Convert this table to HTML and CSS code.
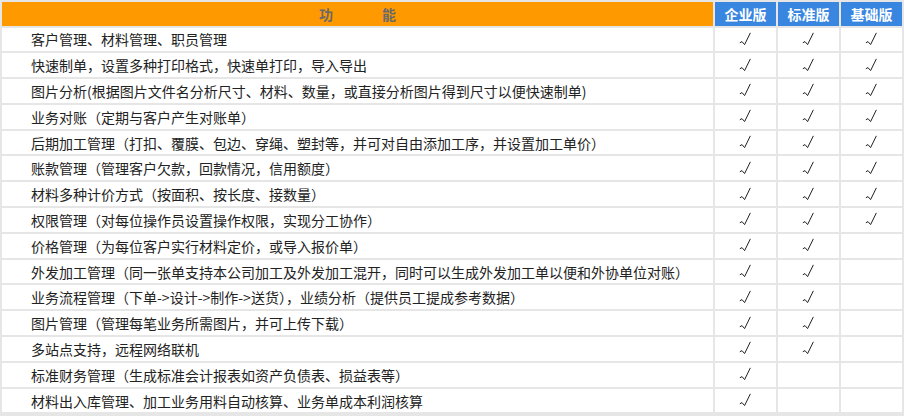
FILE: index.html
```html
<!DOCTYPE html>
<html lang="zh-CN">
<head>
<meta charset="utf-8">
<title>功能对比</title>
<link rel="stylesheet" href="styles.css">
</head>
<body>
<svg class="defs" width="0" height="0" aria-hidden="true">
  <symbol id="ck" viewBox="0 0 14 14">
    <path d="M1.2 10.6 L3 9.6 L5.6 12.6 L11.2 1.2" fill="none" stroke="#222" stroke-width="1" stroke-linecap="round" stroke-linejoin="round"/>
  </symbol>
</svg>
<table class="grid">
  <colgroup><col class="c-func"><col class="c-ed"><col class="c-ed"><col class="c-ed"></colgroup>
  <thead>
    <tr class="head">
      <th class="h-func"><span class="hw">功</span><span class="hw">能</span></th>
      <th class="h-ed">企业版</th>
      <th class="h-ed">标准版</th>
      <th class="h-ed">基础版</th>
    </tr>
  </thead>
  <tbody>
    <tr><td class="f">客户管理、材料管理、职员管理</td><td class="k"><svg class="tick"><use href="#ck"/></svg></td><td class="k"><svg class="tick"><use href="#ck"/></svg></td><td class="k"><svg class="tick"><use href="#ck"/></svg></td></tr>
    <tr><td class="f">快速制单，设置多种打印格式，快速单打印，导入导出</td><td class="k"><svg class="tick"><use href="#ck"/></svg></td><td class="k"><svg class="tick"><use href="#ck"/></svg></td><td class="k"><svg class="tick"><use href="#ck"/></svg></td></tr>
    <tr><td class="f">图片分析(根据图片文件名分析尺寸、材料、数量，或直接分析图片得到尺寸以便快速制单)</td><td class="k"><svg class="tick"><use href="#ck"/></svg></td><td class="k"><svg class="tick"><use href="#ck"/></svg></td><td class="k"><svg class="tick"><use href="#ck"/></svg></td></tr>
    <tr><td class="f">业务对账（定期与客户产生对账单）</td><td class="k"><svg class="tick"><use href="#ck"/></svg></td><td class="k"><svg class="tick"><use href="#ck"/></svg></td><td class="k"><svg class="tick"><use href="#ck"/></svg></td></tr>
    <tr><td class="f">后期加工管理（打扣、覆膜、包边、穿绳、塑封等，并可对自由添加工序，并设置加工单价）</td><td class="k"><svg class="tick"><use href="#ck"/></svg></td><td class="k"><svg class="tick"><use href="#ck"/></svg></td><td class="k"><svg class="tick"><use href="#ck"/></svg></td></tr>
    <tr><td class="f">账款管理（管理客户欠款，回款情况，信用额度）</td><td class="k"><svg class="tick"><use href="#ck"/></svg></td><td class="k"><svg class="tick"><use href="#ck"/></svg></td><td class="k"><svg class="tick"><use href="#ck"/></svg></td></tr>
    <tr><td class="f">材料多种计价方式（按面积、按长度、接数量）</td><td class="k"><svg class="tick"><use href="#ck"/></svg></td><td class="k"><svg class="tick"><use href="#ck"/></svg></td><td class="k"><svg class="tick"><use href="#ck"/></svg></td></tr>
    <tr><td class="f">权限管理（对每位操作员设置操作权限，实现分工协作）</td><td class="k"><svg class="tick"><use href="#ck"/></svg></td><td class="k"><svg class="tick"><use href="#ck"/></svg></td><td class="k"><svg class="tick"><use href="#ck"/></svg></td></tr>
    <tr><td class="f">价格管理（为每位客户实行材料定价，或导入报价单）</td><td class="k"><svg class="tick"><use href="#ck"/></svg></td><td class="k"><svg class="tick"><use href="#ck"/></svg></td><td class="k"></td></tr>
    <tr><td class="f">外发加工管理（同一张单支持本公司加工及外发加工混开，同时可以生成外发加工单以便和外协单位对账）</td><td class="k"><svg class="tick"><use href="#ck"/></svg></td><td class="k"><svg class="tick"><use href="#ck"/></svg></td><td class="k"></td></tr>
    <tr><td class="f">业务流程管理（下单-&gt;设计-&gt;制作-&gt;送货），业绩分析（提供员工提成参考数据）</td><td class="k"><svg class="tick"><use href="#ck"/></svg></td><td class="k"><svg class="tick"><use href="#ck"/></svg></td><td class="k"></td></tr>
    <tr><td class="f">图片管理（管理每笔业务所需图片，并可上传下载）</td><td class="k"><svg class="tick"><use href="#ck"/></svg></td><td class="k"><svg class="tick"><use href="#ck"/></svg></td><td class="k"></td></tr>
    <tr><td class="f">多站点支持，远程网络联机</td><td class="k"><svg class="tick"><use href="#ck"/></svg></td><td class="k"><svg class="tick"><use href="#ck"/></svg></td><td class="k"></td></tr>
    <tr><td class="f">标准财务管理（生成标准会计报表如资产负债表、损益表等）</td><td class="k"><svg class="tick"><use href="#ck"/></svg></td><td class="k"></td><td class="k"></td></tr>
    <tr><td class="f">材料出入库管理、加工业务用料自动核算、业务单成本利润核算</td><td class="k"><svg class="tick"><use href="#ck"/></svg></td><td class="k"></td><td class="k"></td></tr>
  </tbody>
</table>
</body>
</html>
```

FILE: styles.css
```css
html, body {
  margin: 0;
  padding: 0;
  background: #e6e6e6;
}
.defs {
  position: absolute;
  width: 0;
  height: 0;
  overflow: hidden;
}
.grid {
  width: 904px;
  table-layout: fixed;
  border-collapse: separate;
  border-spacing: 2px;
  background: #e6e6e6;
  font-family: "Noto Sans CJK SC", "Noto Sans", sans-serif;
  font-size: 14px;
  color: #222;
}
.c-func { width: 711px; }
.c-ed { width: 61px; }
.grid th, .grid td {
  padding: 0;
  line-height: 16px;
  vertical-align: middle;
}
.grid .head th {
  height: 23.5px;
  font-weight: bold;
  font-size: 14px;
}
.grid .h-func {
  background: #ff9900;
  color: #6a6a6a;
  text-align: center;
}
.hw {
  display: inline-block;
  margin: 0 24.5px;
}
.grid .h-ed {
  background: #3886e0;
  color: #ffffff;
  text-align: center;
}
.grid td {
  height: 23.8px;
  background: #ffffff;
}
.grid td.f {
  padding-left: 29px;
  white-space: nowrap;
  overflow: hidden;
}
.grid td.k {
  text-align: center;
}
.tick {
  display: block;
  width: 14px;
  height: 14px;
  margin: -1px auto 0;
}
```
